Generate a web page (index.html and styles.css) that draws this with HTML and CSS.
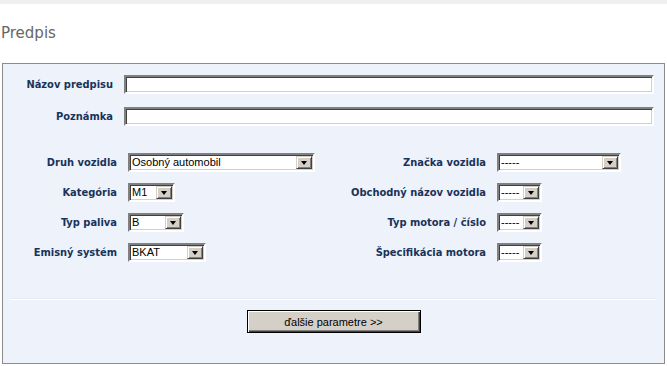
FILE: index.html
```html
<!DOCTYPE html>
<html lang="sk">
<head>
  <meta charset="UTF-8" />
  <title>Predpis</title>
  <link rel="stylesheet" href="styles.css">
</head>
<body>

  <div class="topbar"></div>
  <h1 class="title">Predpis</h1>

  <form class="panel">
    <div class="texts">
      <label class="lbl">Názov predpisu</label>
      <div class="input"></div>
      <label class="lbl">Poznámka</label>
      <div class="input"></div>
    </div>

    <div class="params">
      <label class="lbl">Druh vozidla</label>
      <div class="cell"><div class="combo w-druh"><span class="val">Osobný automobil</span><span class="arrow"><i></i></span></div></div>
      <label class="lbl">Značka vozidla</label>
      <div class="cell"><div class="combo w-znacka"><span class="val">-----</span><span class="arrow"><i></i></span></div></div>

      <label class="lbl">Kategória</label>
      <div class="cell"><div class="combo w-kat"><span class="val">M1</span><span class="arrow"><i></i></span></div></div>
      <label class="lbl">Obchodný názov vozidla</label>
      <div class="cell"><div class="combo w-small"><span class="val">-----</span><span class="arrow"><i></i></span></div></div>

      <label class="lbl">Typ paliva</label>
      <div class="cell"><div class="combo w-palivo"><span class="val">B</span><span class="arrow"><i></i></span></div></div>
      <label class="lbl">Typ motora / číslo</label>
      <div class="cell"><div class="combo w-small"><span class="val">-----</span><span class="arrow"><i></i></span></div></div>

      <label class="lbl">Emisný systém</label>
      <div class="cell"><div class="combo w-emis"><span class="val">BKAT</span><span class="arrow"><i></i></span></div></div>
      <label class="lbl">Špecifikácia motora</label>
      <div class="cell"><div class="combo w-small"><span class="val">-----</span><span class="arrow"><i></i></span></div></div>
    </div>

    <div class="sep"></div>

    <div class="actions">
      <button type="button" class="btn">ďalšie parametre &gt;&gt;</button>
    </div>
  </form>

</body>
</html>
```

FILE: styles.css
```css
body {
  margin: 0;
  background-color: #fff;
  font-family: 'Liberation Sans', Arial, sans-serif;
}

.topbar {
  height: 4px;
  background-color: #efefef;
}

.title {
  margin: 0 0 21px 0;
  padding: 21px 0 0 1px;
  font-family: 'DejaVu Sans', Verdana, sans-serif;
  font-size: 15px;
  line-height: 17px;
  font-weight: normal;
  color: #666;
}

.panel {
  margin: 0 2px 0 2px;
  border: 1px solid #8c8c8c;
  background-color: #eef2fa;
  padding: 0;
}

.lbl {
  font-family: 'DejaVu Sans Condensed', 'DejaVu Sans', sans-serif;
  font-size: 11px;
  font-weight: bold;
  color: #19335a;
  text-align: right;
  white-space: nowrap;
  align-self: center;
}

.texts {
  display: grid;
  grid-template-columns: 110px 1fr;
  column-gap: 11px;
  row-gap: 13px;
  padding: 11px 10px 0 0;
}

.input {
  height: 15px;
  background-color: #fff;
  border: 2px solid;
  border-color: #808080 #fff #fff #808080;
  box-shadow: inset 1px 1px #404040, inset -1px -1px #d4d0c8;
}

.params {
  display: grid;
  grid-template-columns: 114px 212px 135px 1fr;
  column-gap: 11px;
  row-gap: 11px;
  margin-top: 27px;
}

.cell {
  display: flex;
}

.combo {
  display: flex;
  align-items: stretch;
  height: 15px;
  background-color: #fff;
  border: 2px solid;
  border-color: #808080 #fff #fff #808080;
  box-shadow: inset 1px 1px #404040, inset -1px -1px #d4d0c8;
  font-size: 11px;
  color: #000;
  padding: 0 1px 0 0;
}

.val {
  flex: 1;
  padding-left: 2px;
  line-height: 15px;
  white-space: nowrap;
  overflow: hidden;
}

.arrow {
  width: 16px;
  background-color: #d4d0c8;
  border: 1px solid;
  border-color: #d4d0c8 #404040 #404040 #d4d0c8;
  box-shadow: inset 1px 1px #fff, inset -1px -1px #808080;
  box-sizing: border-box;
  display: flex;
  align-items: center;
  justify-content: center;
  margin: 1px 0;
}

.arrow i {
  width: 0;
  height: 0;
  border-left: 3.5px solid transparent;
  border-right: 3.5px solid transparent;
  border-top: 4px solid #000;
}

.w-druh { width: 182px; }
.w-znacka { width: 119px; }
.w-kat { width: 42px; }
.w-small { width: 40px; }
.w-palivo { width: 51px; }
.w-emis { width: 73px; }

.sep {
  margin: 36px 8px 0 7px;
  height: 1px;
  border-top: 1px solid #e4e9f2;
  background-color: #fff;
}

.actions {
  display: flex;
  justify-content: center;
  padding: 10px 0 30px 0;
}

.btn {
  width: 174px;
  height: 23px;
  padding: 0;
  font-family: 'Liberation Sans', Arial, sans-serif;
  font-size: 11px;
  color: #000;
  background-color: #d4d0c8;
  border: 1px solid #000;
  box-shadow: inset 1px 1px #fff, inset -1px -1px #404040, inset -2px -2px #808080;
}
```
